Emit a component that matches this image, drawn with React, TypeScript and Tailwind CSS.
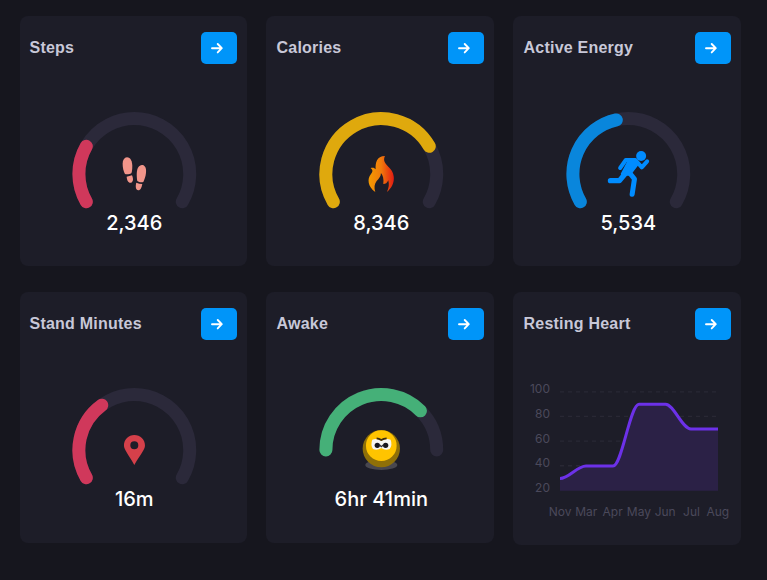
import React from "react";

const ICON_SCALE = "scale(0.33333)";

const polar = (r: number, deg: number) => {
  const a = (deg * Math.PI) / 180;
  return `${(r * Math.sin(a)).toFixed(2)} ${(-r * Math.cos(a)).toFixed(2)}`;
};

const arc = (from: number, to: number) =>
  `M${polar(55.4, from)}A55.4 55.4 0 ${to - from > 180 ? 1 : 0} 1 ${polar(55.4, to)}`;

function Header({ title }: { title: string }) {
  return (
    <div className="flex h-8 items-center justify-between">
      <h2 className="pl-[0.5px] font-['Liberation_Sans',Arial,sans-serif] text-base font-bold tracking-[0.23px] whitespace-nowrap text-[#c8c8d8]">{title}</h2>
      <button className="flex h-8 w-9 items-center rounded-[5px] bg-[#0095f9] pl-[9px]" aria-label={`Open ${title}`}>
        <svg width="14" height="14" viewBox="0 0 14 14" fill="none" stroke="#fff" strokeWidth="1.9" strokeLinecap="round" strokeLinejoin="round">
          <path d="M2 7.2H11.6M7.7 3L11.8 7.2L7.7 11.4" />
        </svg>
      </button>
    </div>
  );
}

type GaugeProps = {
  title: string;
  value: string;
  color: string;
  from?: number;
  to: number;
  children: React.ReactNode;
};

function GaugeCard({ title, value, color, from = -120, to, children }: GaugeProps) {
  return (
    <section className="h-[250px] rounded-lg bg-[#1d1d28] pt-4 pr-[10px] pl-[10px] nth-4:h-[251px] nth-5:h-[251px] nth-[3n+1]:pl-[9px]">
      <Header title={title} />
      <div className="flex flex-col items-center pt-[45px] pl-[2px]">
        <svg width="130" height="100" viewBox="-65.3 -65 130 100" fill="none">
          <path d={arc(from, -from)} stroke="#2b293a" strokeWidth="13" strokeLinecap="round" />
          <path d={arc(from, to)} stroke={color} strokeWidth="13" strokeLinecap="round" />
          <g transform={ICON_SCALE}>{children}</g>
        </svg>
        <p className="pl-[0.5px] font-[Inter,sans-serif] text-[20px] leading-7 font-medium text-white">{value}</p>
      </div>
    </section>
  );
}

const Feet = () => (
  <g fill="#f1958a" transform="translate(-223 -222)">
    <path d="M201 172C212 172 217 185 217 199C217 211 215 219 214 220C209 223 200 224 195 222C191 214 188 204 188 191C188 180 193 173 201 172Z" />
    <path d="M200 230Q208 229 216 226C220 235 221 244 214 248C205 250 201 241 200 230Z" />
    <path d="M248 195C256 197 260 206 258 219C257 230 253 240 250 246C245 248 237 247 232 243C230 230 229 213 234 203C238 197 243 194 248 195Z" />
    <path d="M229 248Q238 252 247 252C245 263 242 271 235 271C227 269 226 259 229 248Z" />
  </g>
);

const Fire = () => (
  <g transform="translate(-214 -222)">
    <path fill="url(#flame)" d="M225 168C219 181 224 188 235 200C256 218 260 251 231 276C237 263 238 254 235 241C231 250 227 252 220 252C222 237 219 226 213 219C213 230 207 235 200 243C193 252 192 263 196 276C173 260 171 236 183 222C190 213 188 210 182 204C189 202 194 203 197 208C196 188 200 168 225 168Z" />
    <defs>
      <linearGradient id="flame">
        <stop offset="0" stopColor="#f49a00" />
        <stop offset=".5" stopColor="#f07a0c" />
        <stop offset="1" stopColor="#e11b12" />
      </linearGradient>
    </defs>
  </g>
);

const Runner = () => (
  <g transform="translate(-220.5 -222)" stroke="#008cff" strokeLinecap="round" strokeLinejoin="round" fill="none">
    <circle cx="259" cy="168" r="15" fill="#008cff" stroke="none" />
    <path strokeWidth="12" d="M196 204L213 180H242L261 202L277 184" />
    <path strokeWidth="16" d="M167 242H194L214 218" />
    <path strokeWidth="15" d="M220 213L239 237L232 283" />
    <path fill="#008cff" strokeWidth="10" d="M223 184L244 184L247 192L224 222L203 222Z" />
  </g>
);

const Pin = () => (
  <path
    transform="translate(-223 -222)"
    fill="#d5404a"
    fillRule="evenodd"
    d="M223 177C241 177 255 191 255 208C255 222 244 231 223 267C203 231 192 222 192 208C192 191 206 177 223 177ZM223 196A12 12 0 1 0 223 220A12 12 0 1 0 223 196Z"
  />
);

const Face = () => (
  <g transform="translate(-214 -222)">
    <ellipse cx="214" cy="267" rx="48" ry="15" fill="#48474f" />
    <circle cx="214" cy="218" r="56" fill="#8f7008" />
    <circle cx="214" cy="209" r="46" fill="#ffc400" />
    <path d="M187 191Q200 186 214 194Q230 186 242 191Q248 207 239 219Q226 225 214 216Q202 225 189 219Q181 207 187 191Z" fill="#f6f6f2" />
    <path d="M200 187Q207 187 214 192Q221 187 230 187" stroke="#3a2b12" strokeWidth="5" fill="none" />
    <circle cx="202" cy="208" r="8" fill="#17171e" />
    <circle cx="227" cy="208" r="8" fill="#17171e" />
    <path d="M209 207L214 212L220 207" stroke="#33333b" strokeWidth="4" fill="none" />
  </g>
);

const months = ["Nov", "Mar", "Apr", "May", "Jun", "Jul", "Aug"];

function HeartCard() {
  return (
    <section className="h-[253px] rounded-lg bg-[#1d1d28] pt-4 pr-[10px] pl-[10px]">
      <Header title="Resting Heart" />
      <svg className="mt-8 overflow-visible" width="208" height="160" viewBox="523 372 208 160" fontFamily="Inter, sans-serif" fontSize="12" fill="#4b495b">
        {[0, 1, 2, 3].map((i) => (
          <path key={i} d={`M560 ${391.8 + i * 24.65}H718`} stroke="#292834" strokeWidth="1.3" strokeDasharray="4 4" />
        ))}
        <path fill="#2b2146" d="M560 478.5C569 478.5 577 466 586 466H613C622 466 630 404.3 639 404.3H665.5C674 404.3 682 429 691 429H718V490.8H560Z" />
        <path fill="none" stroke="#6c31e8" strokeWidth="3" d="M560 478.5C569 478.5 577 466 586 466H613C622 466 630 404.3 639 404.3H665.5C674 404.3 682 429 691 429H718" />
        {[100, 80, 60, 40, 20].map((n, i) => (
          <text key={n} x="550" y={393 + i * 24.75} textAnchor="end">{n}</text>
        ))}
        {months.map((m, i) => (
          <text key={m} x={560 + i * 26.3} y="516" textAnchor="middle">{m}</text>
        ))}
      </svg>
    </section>
  );
}

export default function App() {
  return (
    <main className="min-h-screen bg-[#16161e] pt-4 pl-5">
      <div className="grid grid-cols-[227px_228px_228px] items-start gap-x-[19px] gap-y-[26px]">
        <GaugeCard title="Steps" value="2,346" color="#d0385b" to={-60}><Feet /></GaugeCard>
        <GaugeCard title="Calories" value="8,346" color="#dfa90d" to={60}><Fire /></GaugeCard>
        <GaugeCard title="Active Energy" value="5,534" color="#0986dc" to={-12.5}><Runner /></GaugeCard>
        <GaugeCard title="Stand Minutes" value="16m" color="#d0385b" to={-36}><Pin /></GaugeCard>
        <GaugeCard title="Awake" value="6hr 41min" color="#45b078" from={-90} to={45}><Face /></GaugeCard>
        <HeartCard />
      </div>
    </main>
  );
}
